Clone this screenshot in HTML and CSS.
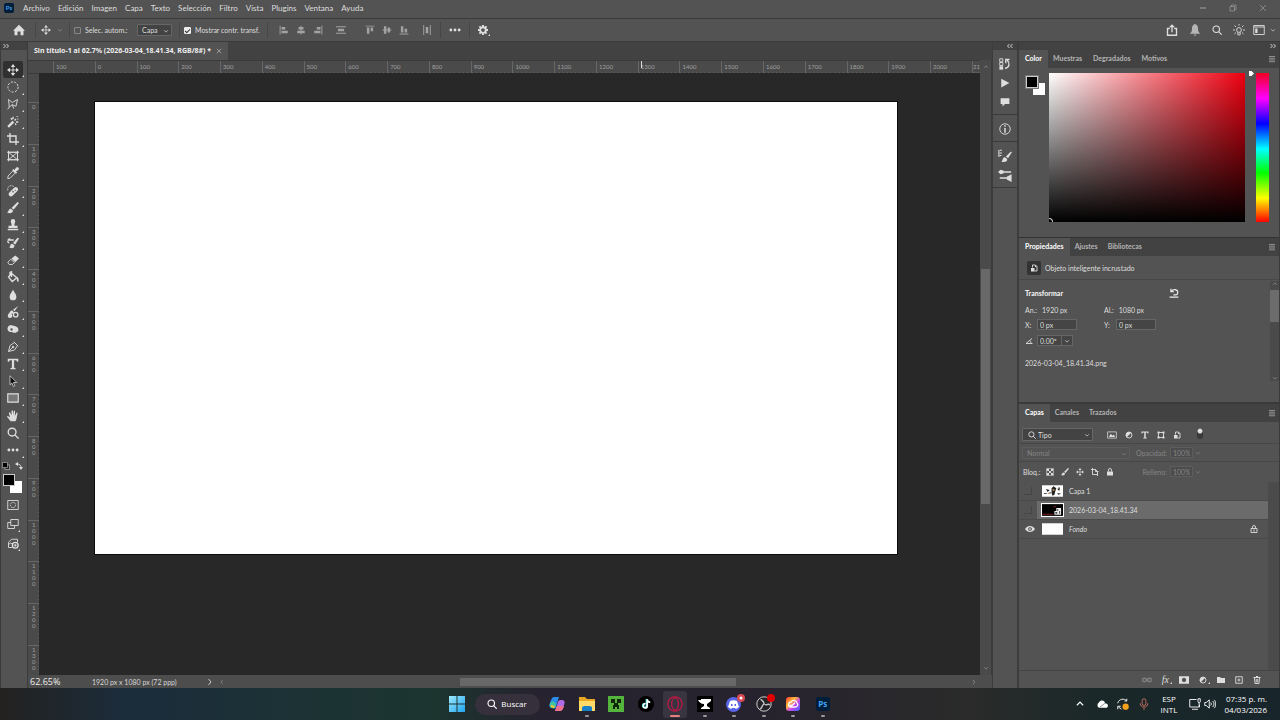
FILE: index.html
```html
<!DOCTYPE html>
<html lang="es">
<head>
<meta charset="utf-8">
<title>Sin título-1 al 62.7%</title>
<link rel="stylesheet" href="styles.css">
</head>
<body>
<svg class="sprite" aria-hidden="true">
  <symbol id="chev-down" viewBox="0 0 16 16"><path class="ln2" d="M3 6l5 5 5-5"/></symbol>
  <symbol id="chev-up" viewBox="0 0 16 16"><path class="ln2" d="M3 10l5-5 5 5"/></symbol>
  <symbol id="chev-right" viewBox="0 0 16 16"><path class="ln2" d="M5 2l5 6-5 6"/></symbol>
  <symbol id="chev-left" viewBox="0 0 16 16"><path class="ln2" d="M10 3L5 8l5 5"/></symbol>
  <symbol id="dbl-right" viewBox="0 0 16 16"><path class="ln2" d="M3 4l4 4-4 4M9 4l4 4-4 4"/></symbol>
  <symbol id="dbl-left" viewBox="0 0 16 16"><path class="ln2" d="M7 4L3 8l4 4M13 4L9 8l4 4"/></symbol>
  <symbol id="burger" viewBox="0 0 16 16"><path class="ln2" d="M2 3h12M2 6.500h12M2 10h12M2 13.500h12"/></symbol>
  <symbol id="home" viewBox="0 0 16 16"><path d="M8 1L0 9h2v6h4v-5h4v5h4V9h2z"/></symbol>
  <symbol id="move" viewBox="0 0 16 16"><path class="ln" d="M8 2v12M2 8h12"/><path d="M8 0l3 4H5zM8 16l-3-4h6zM0 8l4-3v6zM16 8l-4 3V5z"/></symbol>
  <symbol id="al-left" viewBox="0 0 16 16"><path d="M1 1h1.500v14H1zM4 3h6v4H4zM4 9h10v4H4z"/></symbol>
  <symbol id="al-hc" viewBox="0 0 16 16"><path d="M7.200 1h1.600v14H7.200zM4 3h8v4H4zM2 9h12v4H2z"/></symbol>
  <symbol id="al-right" viewBox="0 0 16 16"><path d="M13.500 1H15v14h-1.500zM6 3h6v4H6zM2 9h10v4H2z"/></symbol>
  <symbol id="dist-v" viewBox="0 0 16 16"><path d="M0 2h16v1.500H0zM3 6h10v4H3zM0 12.500h16V14H0z"/></symbol>
  <symbol id="al-top" viewBox="0 0 16 16"><path d="M1 1h14v1.500H1zM3 4h4v10H3zM9 4h4v6H9z"/></symbol>
  <symbol id="al-vc" viewBox="0 0 16 16"><path d="M1 7.200h14v1.600H1zM3 2h4v12H3zM9 4h4v8H9z"/></symbol>
  <symbol id="al-bot" viewBox="0 0 16 16"><path d="M1 13.500h14V15H1zM3 2h4v10H3zM9 6h4v6H9z"/></symbol>
  <symbol id="dist-h" viewBox="0 0 16 16"><path d="M2 0h1.500v16H2zM6 3h4v10H6zM12.500 0H14v16h-1.500z"/></symbol>
  <symbol id="dots" viewBox="0 0 16 16"><circle cx="2.500" cy="8" r="1.900"/><circle cx="8" cy="8" r="1.900"/><circle cx="13.500" cy="8" r="1.900"/></symbol>
  <symbol id="gear" viewBox="0 0 16 16"><circle cx="8" cy="8" r="4.500" fill="none" stroke="currentColor" stroke-width="3"/><path class="ln3" d="M8 0v3M8 13v3M0 8h3M13 8h3M2.300 2.300l2 2M11.700 11.700l2 2M13.700 2.300l-2 2M4.300 11.700l-2 2"/></symbol>
  <symbol id="share" viewBox="0 0 16 16"><path class="ln2" d="M5 6H2v9h12V6h-3M8 11V2M5 4.500L8 1.500l3 3"/></symbol>
  <symbol id="bell" viewBox="0 0 16 16"><path d="M8 0c-3 1-4 3-4 6 0 4-1 5-3 7h14c-2-2-3-3-3-7 0-3-1-5-4-6zM6 14h4l-2 2z"/></symbol>
  <symbol id="search" viewBox="0 0 16 16"><circle class="ln2" cx="6.800" cy="6.800" r="5.200"/><path class="ln2" d="M10.500 10.500L15.500 15.500"/></symbol>
  <symbol id="bulb" viewBox="0 0 16 16"><circle class="ln" cx="8" cy="8" r="3.200"/><path class="ln" d="M6.500 11v3.500h3V11M8 0v2M0 8h2.500M13.500 8H16M2 2l2 2M14 2l-2 2M2 13l2-1.500M14 13l-2-1.500"/></symbol>
  <symbol id="workspace" viewBox="0 0 16 16"><path class="ln" d="M1 2h14v12H1zM1 4h14"/><path d="M3 6h3v6H3z"/></symbol>
  <symbol id="minim" viewBox="0 0 16 16"><path class="ln2" d="M2 8h12"/></symbol>
  <symbol id="restore" viewBox="0 0 16 16"><path class="ln" d="M2 5h9v9H2zM5 5V2h9v9h-3"/></symbol>
  <symbol id="close" viewBox="0 0 16 16"><path class="ln" d="M2 2l12 12M14 2L2 14"/></symbol>
  <symbol id="marquee" viewBox="0 0 16 16"><circle class="ln" cx="8" cy="8" r="6.800" stroke-dasharray="3 1.700"/></symbol>
  <symbol id="lasso" viewBox="0 0 16 16"><path class="ln" d="M2 2l5 4 7-4-2 9-5-2 2 5M2 2l1 10 4-3M3 12l-2 3"/></symbol>
  <symbol id="wand" viewBox="0 0 16 16"><path class="ln3" d="M1.500 14.500l7-7"/><path class="ln2" d="M10 6l2-2M8 1v3M13 1l1-1M12 8h3M14 4h1M5 3l2 2M11 10l1 2"/></symbol>
  <symbol id="crop" viewBox="0 0 16 16"><path class="ln2" d="M4 0v12h12M0 4h12v12"/></symbol>
  <symbol id="frame" viewBox="0 0 16 16"><path class="ln" d="M2 3h12v10H2zM2 3l12 10M14 3L2 13M0 3h16M0 13h16M2 1v14M14 1v14"/></symbol>
  <symbol id="dropper" viewBox="0 0 16 16"><path class="ln" d="M8 5l3 3-7 7-3 .5L1.500 12z"/><path d="M7 4l1.500-1.500L10 4l2-3c3-2 5 1 3 3l-3 2 1.500 1.500L12 9z"/></symbol>
  <symbol id="heal" viewBox="0 0 16 16"><rect x="1" y="6" width="15" height="6" rx="3" transform="rotate(-45 8.500 9)"/><path class="ln" stroke-dasharray="2 1.500" d="M9 2C5-1 0 2 1 7"/><circle cx="8" cy="9" r="1" fill="#444"/><circle cx="11" cy="7" r=".8" fill="#444"/></symbol>
  <symbol id="brush" viewBox="0 0 16 16"><path d="M15.500.5L14 0 6 8l3 2 6.500-8zM5 9c-3 0-2 3-5 5 4 2 8 1 8-3z"/></symbol>
  <symbol id="stamp" viewBox="0 0 16 16"><path d="M8 0a3 3 0 0 0-3 3c0 2 1.500 3 1 6H2v3h12V9h-4c-.5-3 1-4 1-6a3 3 0 0 0-3-3zM1 13h14v2H1z"/></symbol>
  <symbol id="histbrush" viewBox="0 0 16 16"><path d="M15.500 1.500L14 1 8 8l3 2 5-8zM7 9c-3 0-2 3-4 5 4 2 7 1 7-3z"/><path class="ln2" d="M1 4h8M1 4l3-2M3 8c-1 0-2-1-2-3"/></symbol>
  <symbol id="eraser" viewBox="0 0 16 16"><path d="M6 6l5-4 5 4-5 5z"/><path class="ln" d="M5 7l5 4.500-3 2.500H3l-2-3z"/></symbol>
  <symbol id="bucket" viewBox="0 0 16 16"><path class="ln2" d="M6 3l7 6-6 5-5-6zM6 8V1L4 2v3"/><path d="M13 8c3 1 3 4 2 7-2-1-2-3-2-7z"/></symbol>
  <symbol id="drop" viewBox="0 0 16 16"><path d="M8 1c2 4 4.500 6 4.500 9.500a4.500 4.500 0 0 1-9 0C3.500 7 6 5 8 1z"/></symbol>
  <symbol id="mixer" viewBox="0 0 16 16"><path d="M15 0L8 5l2 2zM7 6C4 6 4 9 2 10c2 1 7 1 7-2z"/><circle cx="4" cy="13" r="3"/><circle class="ln2" cx="11.500" cy="11.500" r="3"/></symbol>
  <symbol id="sponge" viewBox="0 0 16 16"><path fill-rule="evenodd" d="M1 6c1-4 6-3 9-2 4 1 6 3 5 7l-2 1-1 1H8l-1-1H4C1 11 0 8 1 6zm5 1a1.600 1.600 0 1 0 .1 0z"/></symbol>
  <symbol id="pen" viewBox="0 0 16 16"><path class="ln" d="M2 14l2-8 6-4 4 4-4 6zM2 14l6-6M9 1l6 6"/><circle cx="8" cy="8" r="1.500"/></symbol>
  <symbol id="type" viewBox="0 0 16 16"><path d="M1 1h14v4h-1.500C13 3 12.500 3 9.500 3v10l2 .5V15h-7v-1.500l2-.5V3C3.500 3 3 3 2.500 5H1z"/></symbol>
  <symbol id="arrow" viewBox="0 0 16 16"><path d="M4 1l9 9H8.500l2 4.500-2 .8-2-4.500L4 13z" fill="#111" stroke="currentColor"/></symbol>
  <symbol id="rect" viewBox="0 0 16 16"><path d="M1 2.500h14v11H1z" fill="#777" stroke="currentColor" stroke-width="1.500"/></symbol>
  <symbol id="hand" viewBox="0 0 16 16"><path d="M5 15C3 13 2 11 0 9c1-2 2 0 4 1L2.500 4c.5-1.500 1.500-1 2 0L6 7V1.500C6.500 0 7.500 0 8 1.500V7l1-5.500c.5-1 1.500-1 1.800.3L10.500 8l2-4c.7-1 1.700-.5 1.500.5L13 10c-.5 3-1 4-2 5z"/></symbol>
  <symbol id="mask" viewBox="0 0 16 16"><path class="ln" d="M1 2h14v12H1z"/><circle class="ln" cx="8" cy="8" r="3.500" stroke-dasharray="2 1"/></symbol>
  <symbol id="screens" viewBox="0 0 16 16"><path class="ln" d="M5 2h10v8H5zM5 6H1v8h9v-4"/></symbol>
  <symbol id="imgplus" viewBox="0 0 16 16"><path class="ln" d="M7 14H2V7l4-4h8v4M2 10l3-2 3 2"/><circle class="ln2" cx="11" cy="11" r="3.800"/><path class="ln" d="M11 9v4M9 11h4"/></symbol>
  <symbol id="swap" viewBox="0 0 16 16"><path class="ln2" d="M4 4c6 0 8 3 8 8"/><path d="M0 4l6-4v8zM12 16l-4-6h8z"/></symbol>
  <symbol id="defcol" viewBox="0 0 16 16"><path d="M6 6h9v9H6z" fill="#222" stroke="currentColor"/><path d="M1 1h10v10H1z" fill="#000" stroke="currentColor"/></symbol>
  <symbol id="history" viewBox="0 0 16 16"><path class="ln" d="M1 1h4v4H1zM1 6h4v4H1z"/><path d="M.5 11h5v4.500h-5z"/><path class="ln2" d="M8 14c6-1 7-7 3-11M9 7V2h5"/></symbol>
  <symbol id="play" viewBox="0 0 16 16"><path d="M2 1l13 7-13 7z"/></symbol>
  <symbol id="chat" viewBox="0 0 16 16"><path d="M1 2h14v9H8l-4 4v-4H1z"/></symbol>
  <symbol id="info" viewBox="0 0 16 16"><circle class="ln" cx="8" cy="8" r="7"/><path d="M7 3h2v2H7zM7 6.500h2V13H7z"/></symbol>
  <symbol id="brushset" viewBox="0 0 16 16"><path d="M16 3.500L14.500 3 9 8.500l2.500 2zM8 9.500c-3 0-2 3-4 5 4 1 7 0 6.500-3z"/><path class="ln" d="M1 1v8M2 1.500h2.500M2 4.500h2.500M2 7.500h2"/></symbol>
  <symbol id="brushes" viewBox="0 0 16 16"><path d="M0 4.500l3-2.500 3.500 1v3L3 7zM15.500 7v9L10 13v-3z"/><path class="ln2" d="M5 4.500h10M2 11.500h9"/></symbol>
  <symbol id="smart" viewBox="0 0 16 16"><path class="ln2" d="M5 7V2h6l3 3v9H9"/><path d="M2 8h7v7H2zM10 2l4 4h-4z"/></symbol>
  <symbol id="reset" viewBox="0 0 16 16"><path class="ln2" d="M4 5c3-4 10-3 10 2 0 3-2 4-4 4H7M1 14.500h14M3 1v5h5"/></symbol>
  <symbol id="angle" viewBox="0 0 16 16"><path class="ln2" d="M14 3L2 13h13M9 7c2 1 3 3 3 6"/></symbol>
  <symbol id="image" viewBox="0 0 16 16"><path class="ln" d="M1 3h14v10H1z"/><path d="M3 11l3-5 3 3 2-2 2 4z"/></symbol>
  <symbol id="adjust" viewBox="0 0 16 16"><circle class="ln2" cx="8" cy="8" r="6"/><path d="M12.500 3.500A6.400 6.400 0 0 0 3.500 12.500z"/></symbol>
  <symbol id="shape" viewBox="0 0 16 16"><path class="ln2" d="M3 3h10v10H3z"/><path d="M1 1h4v4H1zM11 1h4v4h-4zM1 11h4v4H1zM11 11h4v4h-4z"/></symbol>
  <symbol id="checker" viewBox="0 0 16 16"><path class="ln" d="M1 1h14v14H1z"/><path d="M2 2h4v4H2zM10 2h4v4h-4zM6 6h4v4H6zM2 10h4v4H2zM10 10h4v4h-4z"/></symbol>
  <symbol id="artboard" viewBox="0 0 16 16"><path class="ln2" d="M0 3h9l4 4v6H3V0M13 11v5M9 3v4h6"/></symbol>
  <symbol id="lock" viewBox="0 0 16 16"><path d="M2 7h12v8H2z"/><path class="ln2" d="M5 7V4a3 3 0 0 1 6 0v3"/></symbol>
  <symbol id="lock-o" viewBox="0 0 16 16"><path class="ln2" d="M2 7h12v8H2zM5 7V4a3 3 0 0 1 6 0v3"/><path d="M7 9h2v4H7z"/></symbol>
  <symbol id="eye" viewBox="0 0 16 16"><path fill-rule="evenodd" d="M0 8c4-6.500 12-6.500 16 0-4 6.500-12 6.500-16 0zm8-3a3 3 0 1 0 .1 0z"/><circle cx="8" cy="8" r="1.400"/></symbol>
  <symbol id="link" viewBox="0 0 16 16"><circle class="ln2" cx="4" cy="8" r="3"/><circle class="ln2" cx="12" cy="8" r="3"/><path class="ln" d="M5 8h6"/></symbol>
  <symbol id="addmask" viewBox="0 0 16 16"><path fill-rule="evenodd" d="M0 2h16v12H0zm8 2.500a3.500 3.500 0 1 0 .1 0z"/></symbol>
  <symbol id="folder" viewBox="0 0 16 16"><path d="M0 2h6l2 2h8v10H0z"/></symbol>
  <symbol id="plus" viewBox="0 0 16 16"><path class="ln2" d="M1.500 1.500h13v13h-13zM8 5v6M5 8h6"/></symbol>
  <symbol id="trash" viewBox="0 0 16 16"><path d="M1 2h5V0h4v2h5v2H1z"/><path class="ln2" d="M3 4l1 11h8l1-11M6.500 6v7M9.500 6v7"/></symbol>
  <symbol id="cloud" viewBox="0 0 16 16"><path d="M4 13a4 4 0 0 1 0-7c2-4 8-3 8 1 5 0 5 6 1 6z"/><path d="M5 12l7-5" stroke="#777"/></symbol>
  <symbol id="sync" viewBox="0 0 16 16"><path class="ln" d="M1 7c1-6 9-7 12-3V1M13 4h-3M1 15v-4h4M2 12l4 3"/><circle cx="11.500" cy="11.500" r="4.200" fill="#f3a11b"/></symbol>
  <symbol id="mic" viewBox="0 0 16 16"><path class="ln" d="M8 1a2.500 2.500 0 0 0-2.500 2.500v4a2.500 2.500 0 0 0 5 0v-4A2.500 2.500 0 0 0 8 1zM3 7c0 7 10 7 10 0M8 12.500V16"/></symbol>
  <symbol id="monitor" viewBox="0 0 16 16"><path class="ln" d="M10 2H1v10h13V9M4 15h8M12 1h3v4l-1.500 2L12 5zM13.500 7v5"/></symbol>
  <symbol id="speaker" viewBox="0 0 16 16"><path class="ln" d="M1 6h2l4-3.500v11L3 10H1zM9 6c1 1 1 3 0 4M11.500 4c2.500 2 2.500 6 0 8M13.500 2.500c3 3 3 8 0 11"/></symbol>
</svg>

<div class="app">
  <header class="menubar">
    <span class="ps-logo">Ps</span>
    <nav class="menus" aria-label="Menú principal">
      <button>Archivo</button><button>Edición</button><button>Imagen</button><button>Capa</button><button>Texto</button><button>Selección</button><button>Filtro</button><button>Vista</button><button>Plugins</button><button>Ventana</button><button>Ayuda</button>
    </nav>
    <div class="winbtns">
      <button aria-label="Minimizar"><svg class="i8"><use href="#minim"/></svg></button>
      <button aria-label="Restaurar"><svg class="i8"><use href="#restore"/></svg></button>
      <button aria-label="Cerrar"><svg class="i8"><use href="#close"/></svg></button>
    </div>
  </header>

  <div class="options">
    <button class="home" aria-label="Inicio"><svg class="i12"><use href="#home"/></svg></button>
    <div class="group g-move">
      <button aria-label="Mover"><svg class="i10"><use href="#move"/></svg></button>
      <svg class="i6 dim"><use href="#chev-down"/></svg>
    </div>
    <div class="group g-auto">
      <label class="check"><input type="checkbox"><span>Selec. autom.:</span></label>
      <span class="combo capa"><select aria-label="Selección automática"><option>Capa</option></select><svg class="i6"><use href="#chev-down"/></svg></span>
    </div>
    <div class="group g-show">
      <label class="check"><input type="checkbox" checked><span>Mostrar contr. transf.</span></label>
    </div>
    <div class="group g-align">
      <button aria-label="Alinear izquierda"><svg class="i10"><use href="#al-left"/></svg></button>
      <button aria-label="Centrar horizontal"><svg class="i10"><use href="#al-hc"/></svg></button>
      <button aria-label="Alinear derecha"><svg class="i10"><use href="#al-right"/></svg></button>
      <button class="apart" aria-label="Distribuir vertical"><svg class="i10"><use href="#dist-v"/></svg></button>
      <button class="apart2" aria-label="Alinear arriba"><svg class="i10"><use href="#al-top"/></svg></button>
      <button aria-label="Centrar vertical"><svg class="i10"><use href="#al-vc"/></svg></button>
      <button aria-label="Alinear abajo"><svg class="i10"><use href="#al-bot"/></svg></button>
      <button class="apart" aria-label="Distribuir horizontal"><svg class="i10"><use href="#dist-h"/></svg></button>
    </div>
    <div class="group g-more"><button aria-label="Más"><svg class="i12"><use href="#dots"/></svg></button></div>
    <div class="group g-gear"><button class="corner" aria-label="Ajustes"><svg class="i10"><use href="#gear"/></svg></button></div>
    <div class="right-tools">
      <button aria-label="Compartir"><svg class="i12"><use href="#share"/></svg></button>
      <button class="soft" aria-label="Avisos"><svg class="i12"><use href="#bell"/></svg></button>
      <button aria-label="Buscar"><svg class="i10"><use href="#search"/></svg></button>
      <button aria-label="Consejos"><svg class="i12"><use href="#bulb"/></svg></button>
      <button class="ws" aria-label="Espacio de trabajo"><svg class="i12"><use href="#workspace"/></svg><svg class="i6"><use href="#chev-down"/></svg></button>
    </div>
  </div>

  <main class="work">
    <aside class="toolbox">
      <button class="collapse" aria-label="Expandir"><svg class="i8"><use href="#dbl-right"/></svg></button>
      <div class="tools" id="tools"></div>
      <div class="minis"><svg class="i8"><use href="#defcol"/></svg><svg class="i8"><use href="#swap"/></svg></div>
      <div class="swatches"><span class="bg"></span><span class="fg"></span></div>
      <div class="modes">
        <button aria-label="Máscara rápida"><svg class="i12"><use href="#mask"/></svg></button>
        <button class="corner" aria-label="Modo de pantalla"><svg class="i12"><use href="#screens"/></svg></button>
        <button class="corner" aria-label="Generar"><svg class="i12"><use href="#imgplus"/></svg></button>
      </div>
    </aside>

    <section class="document">
      <div class="doctabs"><div class="doctab"><span>Sin título-1 al 62.7% (2026-03-04_18.41.34, RGB/8#) *</span><button aria-label="Cerrar pestaña"><svg class="i6"><use href="#close"/></svg></button></div></div>
      <div class="stage">
        <div class="origin"></div>
        <div class="ruler-h"><div class="cells" id="rh"></div><div class="cell last"><span>21</span></div><span class="cursor"></span></div>
        <div class="vscroll"><svg class="i6"><use href="#chev-up"/></svg><div class="track"><div class="thumb"></div></div><svg class="i6"><use href="#chev-down"/></svg></div>
        <div class="ruler-v"><div class="cells" id="rv"></div><div class="cell last"><span>1300</span></div></div>
        <div class="canvas"><div class="page"></div></div>
      </div>
      <footer class="status">
        <span class="zoom">62.65%</span><span class="dims">1920 px x 1080 px (72 ppp)</span>
        <button aria-label="Información"><svg class="i8"><use href="#chev-right"/></svg></button>
        <div class="hscroll"><svg class="i6"><use href="#chev-left"/></svg><div class="track"><div class="thumb"></div></div><svg class="i6"><use href="#chev-right"/></svg></div>
      </footer>
    </section>

    <aside class="strip">
      <button class="collapse" aria-label="Expandir paneles"><svg class="i8"><use href="#dbl-left"/></svg></button>
      <div class="dock">
        <div class="dockgroup"><button aria-label="Historia"><svg class="i12"><use href="#history"/></svg></button><button aria-label="Acciones"><svg class="i10"><use href="#play"/></svg></button><button aria-label="Comentarios"><svg class="i10"><use href="#chat"/></svg></button></div>
        <div class="dockgroup"><button aria-label="Información"><svg class="i12"><use href="#info"/></svg></button></div>
        <div class="dockgroup"><button aria-label="Ajustes de pincel"><svg class="i14"><use href="#brushset"/></svg></button><button aria-label="Pinceles"><svg class="i14"><use href="#brushes"/></svg></button></div>
      </div>
    </aside>

    <aside class="panels">
      <button class="collapse end" aria-label="Contraer paneles"><svg class="i8"><use href="#dbl-right"/></svg></button>
      <section class="panel p-color">
        <div class="tabs"><button class="on">Color</button><button>Muestras</button><button>Degradados</button><button>Motivos</button><svg class="i8"><use href="#burger"/></svg></div>
        <div class="picker">
          <div class="swatches"><span class="bg"></span><span class="fg"></span></div>
          <div class="field"><span class="spot"></span></div>
          <div class="hue"><svg class="knob" viewBox="0 0 6 6"><path d="M0 0h3l3 3-3 3H0z"/></svg></div>
        </div>
      </section>
      <section class="panel p-props">
        <div class="tabs"><button class="on">Propiedades</button><button>Ajustes</button><button>Bibliotecas</button><svg class="i8"><use href="#burger"/></svg></div>
        <div class="kind"><span class="kindicon"><svg class="i8"><use href="#smart"/></svg></span><span>Objeto inteligente incrustado</span></div>
        <div class="propbody">
          <div class="form">
            <div class="formhead"><strong>Transformar</strong><button aria-label="Restablecer"><svg class="i10"><use href="#reset"/></svg></button></div>
            <div class="pair"><div><span>An.:</span><span class="val">1920 px</span></div><div><span>Al.:</span><span class="val">1080 px</span></div></div>
            <div class="pair xy"><div><label for="px">X:</label><input id="px" type="text" value="0 px"></div><div><label for="py">Y:</label><input id="py" type="text" value="0 px"></div></div>
            <div class="ang"><svg class="i8"><use href="#angle"/></svg><input type="text" value="0.00º" aria-label="Ángulo"><button aria-label="Ángulos"><svg class="i6"><use href="#chev-down"/></svg></button></div>
            <div class="fname">2026-03-04_18.41.34.png</div>
          </div>
          <div class="pscroll"><svg class="i6"><use href="#chev-up"/></svg><div class="track"><div class="thumb"></div></div><svg class="i6"><use href="#chev-down"/></svg></div>
        </div>
      </section>
      <section class="panel p-layers">
        <div class="tabs"><button class="on">Capas</button><button>Canales</button><button>Trazados</button><svg class="i8"><use href="#burger"/></svg></div>
        <div class="row filter">
          <span class="combo tipo"><svg class="i8 lead"><use href="#search"/></svg><select aria-label="Filtro"><option>Tipo</option></select><svg class="i6"><use href="#chev-down"/></svg></span>
          <div class="ficons"><svg class="i10"><use href="#image"/></svg><svg class="i8"><use href="#adjust"/></svg><svg class="i8"><use href="#type"/></svg><svg class="i8"><use href="#shape"/></svg><svg class="i8"><use href="#smart"/></svg></div>
          <label class="toggle"><input type="checkbox" checked aria-label="Filtrado"></label>
        </div>
        <div class="row blend off">
          <span class="combo normal"><select aria-label="Modo de fusión" disabled><option>Normal</option></select><svg class="i6"><use href="#chev-down"/></svg></span>
          <label for="op">Opacidad:</label><span class="pct"><input id="op" type="text" value="100%" disabled><svg class="i6"><use href="#chev-down"/></svg></span>
        </div>
        <div class="row locks">
          <span>Bloq.:</span><div class="licons"><svg class="i8"><use href="#checker"/></svg><svg class="i8"><use href="#brush"/></svg><svg class="i8"><use href="#move"/></svg><svg class="i8"><use href="#artboard"/></svg><svg class="i8"><use href="#lock"/></svg></div>
          <label class="off" for="fi">Relleno:</label><span class="pct off"><input id="fi" type="text" value="100%" disabled><svg class="i6"><use href="#chev-down"/></svg></span>
        </div>
        <div class="layerwrap">
          <ul class="layers">
            <li><button class="vis" aria-label="Visibilidad"></button><div class="lay">
              <svg class="thumbimg" viewBox="0 0 22 12"><path fill="#fff" d="M0 0h22v12H0z"/><path fill="#222" d="M10 3l2-2 3 2-1 3-1 4-2 1-1-3zM4 4l4 1-2 2zM16 4l3-2-1 4zM2 8h3v1H2zM7 8l2-1v2zM16 8l4 1-3 1z"/><path fill="#a87b4d" d="M11 4h2v2h-2zM17 2h1v2h-1zM6 8h2v1H6z"/></svg><span>Capa 1</span></div></li>
            <li class="sel"><button class="vis" aria-label="Visibilidad"></button><div class="lay">
              <svg class="thumbimg ring" viewBox="0 0 22 12"><path fill="#000" d="M0 0h22v12H0z"/><path fill="#7b2020" d="M0 10h12v1H0zM12 2h3v1h-3z"/><path fill="#eee" d="M15 4h5v7h-7V7h2z"/><path fill="#444" d="M14 8h2v2h-2zM16 5h1v2h-1zM18 7h1v3h-1z"/></svg><span>2026-03-04_18.41.34</span></div></li>
            <li><button class="vis eye" aria-label="Visibilidad"><svg class="i10"><use href="#eye"/></svg></button><div class="lay"><svg class="thumbimg" viewBox="0 0 22 12"><path fill="#fff" d="M0 0h22v12H0z"/></svg><em>Fondo</em><svg class="i8 lk"><use href="#lock-o"/></svg></div></li>
          </ul>
          <div class="gutter"></div>
        </div>
        <footer class="layfoot"><button class="faint" aria-label="Enlazar"><svg class="i10"><use href="#link"/></svg></button><button class="corner fx">fx</button><button aria-label="Máscara"><svg class="i10"><use href="#addmask"/></svg></button><button class="corner" aria-label="Ajuste"><svg class="i8"><use href="#adjust"/></svg></button><button aria-label="Grupo"><svg class="i8"><use href="#folder"/></svg></button><button aria-label="Nueva capa"><svg class="i8"><use href="#plus"/></svg></button><button aria-label="Eliminar"><svg class="i8"><use href="#trash"/></svg></button></footer>
      </section>
    </aside>
  </main>

  <footer class="taskbar">
    <div class="apps">
      <button aria-label="Inicio de Windows"><svg class="app-i" viewBox="0 0 16 16"><defs><linearGradient id="win" x2="1" y2="1"><stop stop-color="#9fe8ff"/><stop offset="1" stop-color="#1da5ee"/></linearGradient></defs><path fill="url(#win)" d="M0 0h7.500v7.500H0zM8.500 0H16v7.500H8.500zM0 8.500h7.500V16H0zM8.500 8.500H16V16H8.500z"/></svg></button>
      <button class="find"><svg class="i10"><use href="#search"/></svg><span>Buscar</span></button>
      <button aria-label="Copilot"><svg class="app-i" viewBox="0 0 16 16"><path fill="#2a8be8" d="M5 1h5l-3 10c-1 3-2 1-4 1-3 0-3-3-2-5C2 4 3 1 5 1z"/><path fill="#42c79b" d="M1 7l3-2 3 3-1 4c-4 1-6-1-5-5z"/><path fill="#f0c03a" d="M2 9l4 1-1 2c-2 0-4-1-3-3z"/><path fill="#b26be8" d="M11 4h2c3 0 3 3 2 5-1 4-2 6-4 6H6l3-9c.5-1 1-2 2-2z"/><path fill="#f0708b" d="M8 10h7c-1 3-2 5-4 5H6z"/></svg></button>
      <button class="run" aria-label="Explorador"><svg class="app-i" viewBox="0 0 16 16"><path fill="#e8a722" d="M0 1h6l2 2h8v12H0z"/><path fill="#ffda66" d="M0 5h16v10H0z"/><path fill="#1680c9" d="M3 11l2-1h6l2 1v4H3z"/></svg></button>
      <button aria-label="Minecraft"><svg class="app-i" viewBox="0 0 16 16"><path fill="#55b43c" d="M0 0h16v16H0z"/><path fill="#112808" d="M3 3h4v4H3zM9 3h4v4H9zM6 7h4v2h1v4H9v-2H7v2H5V9h1z"/></svg></button>
      <button aria-label="TikTok"><svg class="app-i" viewBox="0 0 16 16"><circle cx="8" cy="8" r="8" fill="#000"/><g fill="none" stroke-width="1.700"><path stroke="#26e4e4" d="M7 7.500c-3 0-3 4-.5 4 1 0 2-.8 2-2V3c0 2 1.500 3 3 3"/><path stroke="#fff" d="M7.700 7.500c-3 0-3 4.500-.5 4.500 1 0 2-.8 2-2V3.200c0 2 1.500 3 3 3"/></g></svg></button>
      <button class="run active" aria-label="Opera GX"><svg class="app-i" viewBox="0 0 16 16"><circle cx="8" cy="8" r="7.200" fill="none" stroke="#c91546" stroke-width="1.200"/><ellipse cx="8" cy="8" rx="3.300" ry="6" fill="none" stroke="#c91546" stroke-width="1.200"/></svg></button>
      <button class="run" aria-label="Anvil"><svg class="app-i" viewBox="0 0 16 16"><path fill="#000" d="M0 0h16v16H0z"/><path fill="#fff" d="M1 4h3V3h10v2l-4 3v2l3 2v1H4v-1l3-2V8C4 8 2 6 1 4z"/></svg></button>
      <button class="run" aria-label="Discord"><svg class="app-i" viewBox="0 0 16 16"><circle cx="7.500" cy="8.500" r="7.500" fill="#5865e8"/><path fill="#fff" fill-rule="evenodd" d="M4 5c2-1 5-1 7 0l2 6-3 2-1-1H6l-1 1-3-2zm1 3v2h1.500V8zm3.500 0v2H10V8z"/></svg><svg class="badge" viewBox="0 0 8 8"><circle cx="4" cy="4" r="4" fill="#d84a50"/><circle cx="4" cy="4" r="1.500" fill="#fff"/></svg></button>
      <button class="run" aria-label="OBS"><svg class="app-i" viewBox="0 0 16 16"><circle cx="8" cy="8" r="7.200" fill="#222326" stroke="#ccc"/><path d="M8 8c0-4-3-3-3-5M8 8c3 2 4-1 6 1M8 8c-3 2-1 4-4 5" fill="none" stroke="#bbb" stroke-width="1.500"/></svg><svg class="badge" viewBox="0 0 8 8"><circle cx="4" cy="4" r="4" fill="#e00000"/></svg></button>
      <button class="run" aria-label="Creative Cloud"><svg class="app-i" viewBox="0 0 16 16"><defs><linearGradient id="cc" y2="1" x2="1"><stop stop-color="#f33"/><stop offset=".35" stop-color="#fb3"/><stop offset=".6" stop-color="#c4e"/><stop offset="1" stop-color="#36f"/></linearGradient></defs><rect x="1" y="1" width="14" height="14" rx="3" fill="url(#cc)"/><path d="M5 11c-3-2-1-5 1-5 2-3 6-1 6 1 2 2 0 4-2 4zM5 9c2 2 4-2 5-2" fill="none" stroke="#fff" stroke-width="1.300"/></svg></button>
      <button class="run" aria-label="Photoshop"><span class="ps-logo big">Ps</span></button>
    </div>
    <div class="tray">
      <button class="more" aria-label="Iconos ocultos"><svg class="i10"><use href="#chev-up"/></svg></button>
      <svg class="i12"><use href="#cloud"/></svg><svg class="i12"><use href="#sync"/></svg><svg class="i12 micc"><use href="#mic"/></svg>
      <button class="lang"><span>ESP</span><span>INTL</span></button>
      <svg class="i12 mon"><use href="#monitor"/></svg><svg class="i12 spk"><use href="#speaker"/></svg>
      <button class="clock"><span>07:35 p. m.</span><span>04/03/2026</span></button>
    </div>
  </footer>
</div>
<script src="script.js"></script>
</body>
</html>
```
FILE: styles.css
```css
:root {
  --panel: #535353;
  --bar: #424242;
  --line: #3b3b3b;
  --text: #dedede;
  --small: 7px;
}
* { box-sizing: border-box; }
body { margin: 0; background: var(--panel); color: var(--text); font: var(--small)/10px Lato, "Open Sans", sans-serif; }
button, input, select { font: inherit; color: inherit; background: none; border: 0; margin: 0; padding: 0; border-radius: 0; appearance: none; outline: 0; }
button { display: flex; align-items: center; justify-content: center; white-space: nowrap; }
svg { display: block; fill: currentColor; flex: none; }
.sprite { position: absolute; width: 0; height: 0; }
.ln, .ln2, .ln3 { fill: none; stroke: currentColor; stroke-width: 1.2; }
.ln2 { stroke-width: 1.8; }
.ln3 { stroke-width: 3; }
.i6 { width: 6px; height: 6px; }
.i8 { width: 8px; height: 8px; }
.i10 { width: 10px; height: 10px; }
.i12 { width: 12px; height: 12px; }
.i14 { width: 14px; height: 14px; }
.dim { color: #999; }
.corner { position: relative; }
.corner::after { content: ""; position: absolute; right: -1px; bottom: 1px; border: 1px solid transparent; border-right-color: #ddd; border-bottom-color: #ddd; }

.app { display: grid; grid-template-rows: 19px 23px 1fr 32px; grid-template-columns: 100%; min-height: 100vh; }

/* Menu bar */
.menubar { display: flex; align-items: center; padding: 0 13px 2px 4px; border-bottom: 1px solid var(--line); font-size: 8px; }
.ps-logo { display: grid; place-items: center; width: 10px; height: 10px; border-radius: 2px; background: #001e3a; color: #42a5f5; font-size: 6px; font-weight: 700; }
.menus { display: flex; gap: 8px; margin-left: 9px; }
.winbtns { display: flex; gap: 22px; margin-left: auto; color: #aaa; }

/* Options bar */
.options { display: flex; align-items: center; border-bottom: 1px solid var(--line); }
.home { width: 35px; padding-left: 2px; }
.group { display: flex; align-items: center; height: 16px; border-left: 1px solid #474747; }
.g-move { width: 34px; gap: 6px; padding-left: 5px; }
.g-auto { width: 110px; padding-left: 4px; justify-content: space-between; padding-right: 7px; }
.g-show { width: 88px; padding-left: 4px; }
.check { display: flex; align-items: center; gap: 4px; white-space: nowrap; }
.check input { display: grid; place-items: center; width: 7px; height: 7px; border: 1px solid #888; border-radius: 1px; }
.check input:checked { background: #eee; border-color: #eee; }
.check input:checked::after { content: ""; width: 4px; height: 2px; border: solid #333; border-width: 0 0 1px 1px; transform: rotate(-45deg); }
.combo { position: relative; display: flex; align-items: center; background: #434343; border: 1px solid #666; border-radius: 1px; height: 12px; }
.combo select { flex: 1; min-width: 0; padding: 0 10px 0 4px; line-height: 10px; }
.combo select:disabled { opacity: 1; }
.combo > svg:last-child { position: absolute; right: 2px; top: 3px; pointer-events: none; }
.capa { width: 35px; }
.g-align { width: 173px; padding-left: 11px; gap: 7px; color: #a2a2a2; }
.apart { margin-left: 6px; }
.apart2 { margin-left: 12px; }
.g-more { width: 29px; justify-content: center; }
.g-gear { padding-left: 8px; }
.g-gear .corner::after { right: -2px; bottom: -1px; }
.right-tools { display: flex; align-items: center; gap: 11px; margin-left: auto; padding-right: 4px; }
.soft { color: #b5b5b5; }
.ws { gap: 5px; margin-left: -3px; }

/* Workspace */
.work { display: grid; grid-template-columns: 28px minmax(0, 1fr) 27px 261px; min-height: 0; background: var(--bar); }
.collapse { height: 8px; width: 100%; background: var(--bar); }
.toolbox { display: flex; flex-direction: column; background: var(--panel); border-left: 1px solid var(--line); border-right: 1px solid var(--line); }
.toolbox .collapse { justify-content: flex-start; padding-left: 1px; }
.tools { display: grid; grid-auto-rows: 1fr; height: 398px; margin: 11px 4px 0 2px; }
.tools button { border-radius: 2px; }
.tools button.on { background: #303030; }
.minis { display: flex; gap: 5px; padding: 3px 2px 0 1px; margin-bottom: 4px; }
.swatches { position: relative; width: 19px; height: 19px; }
.swatches span { position: absolute; width: 12px; height: 12px; }
.swatches .fg { left: 0; top: 0; background: #000; border: 1px solid #ccc; }
.swatches .bg { right: 0; bottom: 0; background: #fff; }
.toolbox .swatches { margin-left: 2px; }
.modes { display: grid; grid-auto-rows: 19px; justify-content: center; margin: 2px 2px 0 0; }

.document { display: flex; flex-direction: column; min-width: 0; }
.doctabs { height: 18px; display: flex; }
.doctab { display: flex; align-items: center; gap: 5px; padding: 0 6px; background: var(--panel); font-family: "Noto Sans", "Open Sans", sans-serif; font-weight: 700; color: #eee; white-space: nowrap; }
.stage { flex: 1; display: grid; grid-template: 13px minmax(0, 1fr) / 11px minmax(0, 1fr) 12px; }
.origin, .ruler-h, .ruler-v { background: #4a4a4a; color: #a0a0a0; border-top: 1px solid #3a3a3a; }
.ruler-h { position: relative; display: flex; padding-left: 14px; overflow: hidden; }
.ruler-h .cells { flex: 1; display: flex; }
.ruler-h .cell { flex: 1; min-width: 0; border-left: 1px solid #666; padding-left: 2px; line-height: 12px; font-size: 6px; background: repeating-linear-gradient(90deg, #5c5c5c 0 1px, transparent 1px 10%) bottom / 100% 1px no-repeat; }
.ruler-h .cell.last { flex: 0 0 8px; padding-left: 0; }
.cursor { position: absolute; left: 64%; top: 0; width: 1px; height: 7px; background: #ddd; }
.ruler-v { display: flex; flex-direction: column; padding-top: 28px; overflow: hidden; }
.ruler-v .cells { flex: 1; display: flex; flex-direction: column; }
.ruler-v .cell { flex: 1; min-height: 0; border-top: 1px solid #666; padding: 1px 0 0 4px; font-size: 6px; line-height: 6px; background: repeating-linear-gradient(180deg, #5c5c5c 0 1px, transparent 1px 10%) right / 1px 100% no-repeat; }
.ruler-v .cell span { display: block; width: 4px; word-break: break-all; }
.ruler-v .cell.last { flex: 0 0 30px; }
.vscroll { grid-row: 1 / 3; grid-column: 3; display: flex; flex-direction: column; align-items: center; background: #4a4a4a; color: #999; padding: 4px 0; border-right: 1px solid var(--line); }
.track { flex: 1; align-self: stretch; }
.vscroll .track { padding-top: 199px; margin-left: 1px; }
.vscroll .thumb { height: 235px; background: #686868; margin-right: 1px; }
.canvas { display: flex; background: #282828; padding: 29px 83px 121px 56px; }
.page { flex: 1; background: #fff; outline: 1px solid #0c0c0c; }
.status { display: flex; align-items: center; height: 13px; color: #d5d5d5; background: #4d4d4d; }
.zoom { width: 62px; padding-left: 2px; font: 9px/12px "Open Sans", sans-serif; color: #eee; }
.dims { width: 116px; padding-left: 2px; white-space: nowrap; }
.hscroll { flex: 1; display: flex; align-items: center; color: #999; margin-left: 5px; padding-right: 15px; }
.hscroll .track { padding-left: 31%; }
.hscroll .thumb { width: 54%; height: 8px; background: #686868; }

/* Icon strip */
.strip { padding: 0 2px 0 1px; display: flex; flex-direction: column; background: #3c3c3c; }
.strip .collapse { justify-content: flex-end; padding-right: 3px; }
.dock { flex: 1; background: var(--panel); }
.dockgroup { display: grid; justify-content: center; grid-auto-rows: 19px; padding: 4px 0 3px; border-bottom: 1px solid #3a3a3a; }

/* Panels */
.panels { display: flex; flex-direction: column; min-width: 0; border-right: 1px solid var(--line); }
.end { justify-content: flex-end; padding-right: 2px; }
.panel { background: var(--panel); display: flex; flex-direction: column; }
.tabs { display: flex; height: 18px; background: var(--bar); color: #b4b4b4; font-weight: 700; padding-right: 3px; align-items: center; }
.tabs button { height: 100%; padding: 0 5px 2px; }
.tabs .on { background: var(--panel); color: #fff; padding: 0 6px 2px; }
.tabs > svg { margin-left: auto; color: #999; }
.p-color { border-bottom: 1px solid #333; }
.p-color .tabs button + button { padding: 0 6px 2px 5px; }
.picker { display: grid; grid-template-columns: 23px 1fr 13px; padding: 5px 10px 15px 7px; height: 169px; }
.picker .swatches { margin-top: 3px; }
.picker .swatches .fg { outline: 1px solid #777; }
.field { position: relative; overflow: hidden; background: linear-gradient(0deg, #000, transparent), linear-gradient(90deg, #fff, #ee0010); margin-right: 11px; }
.spot { position: absolute; left: -3px; bottom: -3px; width: 7px; height: 7px; border: 1px solid #fff; border-radius: 50%; }
.hue { position: relative; background: linear-gradient(#f00020, #f0f 17%, #00f 34%, #0ff 51%, #0f0 67%, #ff0 84%, #f00); }
.hue .knob { position: absolute; left: -7px; top: -2px; width: 5px; height: 5px; fill: #fff; }
.p-props { border-bottom: 2px solid #3a3a3a; height: 166px; }
.kind { display: flex; align-items: center; gap: 4px; height: 24px; padding-left: 8px; border-bottom: 1px solid #474747; }
.kindicon { display: grid; place-items: center; width: 14px; height: 14px; background: #333; border-radius: 2px; }
.propbody { flex: 1; display: flex; }
.form { flex: 1; padding: 8px 0 0 6px; }
.formhead { display: flex; align-items: center; font-weight: 700; color: #eee; }
.formhead strong { width: 144px; }
.pair { display: grid; grid-template-columns: 79px 79px; margin-top: 7px; }
.pair > div { display: flex; align-items: center; }
.val { margin-left: 5px; }
.xy { margin-top: 4px; }
.xy label { width: 12px; }
input[type="text"] { width: 40px; height: 11px; background: #454545; border: 1px solid #666; padding: 0 2px; line-height: 9px; }
.ang { display: flex; align-items: center; margin-top: 5px; }
.ang input { width: 25px; margin-left: 4px; }
.ang button { width: 11px; height: 11px; border: 1px solid #666; border-left: 0; background: #454545; }
.fname { margin-top: 12px; }
.pscroll { width: 9px; height: 100px; margin-top: 1px; display: flex; flex-direction: column; align-items: center; background: #4a4a4a; color: #999; }
.pscroll .track { padding-top: 3px; }
.pscroll .thumb { height: 32px; background: #6c6c6c; }

.p-layers { flex: 1; }
.row { display: flex; align-items: center; height: 18px; padding-left: 3px; border-bottom: 1px solid #474747; white-space: nowrap; }
.filter { height: 22px; padding-top: 4px; }
.tipo { width: 71px; height: 13px; padding-left: 5px; }
.tipo select { padding-left: 2px; }
.ficons { display: flex; align-items: center; gap: 8px; margin-left: 14px; }
.toggle { margin-left: 16px; height: 14px; }
.toggle input { display: block; width: 6px; height: 11px; border-radius: 3px; background: radial-gradient(circle at 50% 3px, #ddd 0 2px, #3a3a3a 3px); }
.off { color: #858585; }
.blend .combo { width: 108px; background: none; border-color: #5c5c5c; margin-right: 4px; }
.off label, label.off { width: 33px; text-align: right; }
.pct { display: flex; align-items: center; margin-left: 3px; }
.pct input { width: 23px; border-color: #5d5d5d; background: #4c4c4c; }
.pct svg { margin-left: 2px; }
.locks { height: 20px; border: 0; padding-left: 4px; padding-bottom: 1px; }
.locks > span:first-child { width: 18px; }
.licons { display: flex; gap: 7px; margin-left: 5px; }
.locks label.off { margin-left: 20px; }
.layerwrap { flex: 1; display: flex; }
.layers { flex: 1; margin: 0; padding: 0; list-style: none; }
.layers li { display: grid; grid-template-columns: 18px 1fr; height: 19px; border-bottom: 1px solid #4a4a4a; }
.lay { display: flex; align-items: center; padding-left: 5px; }
.sel .lay { background: #6b6b6b; }
.vis::before { content: ""; width: 7px; height: 7px; border: solid #464646; border-width: 0 1px 1px 0; }
.eye { padding-left: 3px; }
.eye::before { content: none; }
.thumbimg { width: 21px; height: 12px; margin-right: 6px; }
.ring { outline: 1px solid #fff; }
.lk { margin-left: auto; margin-right: 10px; }
.gutter { width: 11px; background: #4b4b4b; }
.layfoot { display: flex; align-items: center; justify-content: flex-end; gap: 10px; height: 18px; padding-right: 18px; border-top: 1px solid #444; }
.layfoot .corner::after { right: -3px; bottom: 0; }
.fx { font: italic 10px/8px "Liberation Serif", serif; }
.faint { color: #888; }

/* Taskbar */
.taskbar { position: relative; display: flex; justify-content: center; color: #fff; font-family: "Open Sans", sans-serif; font-size: 8px; background: linear-gradient(90deg, #232220, #1b2c3b 10%, #1c3236 22%, #1c352f 34%, #26222f 42%, #27232e 60%, #2a2b2a 76%, #1a2829 86%, #18252b); }
.apps { display: flex; align-items: center; justify-content: space-between; width: 390px; }
.apps button { position: relative; width: 24px; height: 27px; border-radius: 3px; }
.app-i { width: 16px; height: 16px; }
.apps .find { width: 65px; height: 21px; border-radius: 11px; background: #36303c; gap: 4px; }
.run::after { content: ""; position: absolute; bottom: 1px; width: 4px; height: 2px; border-radius: 1px; background: #999; }
.active { background: #383541; }
.active::after { width: 10px; background: #e88080; }
.badge { position: absolute; right: 1px; top: 3px; width: 8px; height: 8px; }
.ps-logo.big { width: 14px; height: 14px; font-size: 8px; }
.tray { position: absolute; right: 13px; top: 0; height: 100%; display: flex; align-items: center; gap: 9px; }
.more { margin-right: 2px; }
.micc { color: #c9705f; }
.lang { flex-direction: column; width: 20px; margin-right: 1px; line-height: 11px; }
.spk { margin-left: -6px; }
.clock { flex-direction: column; align-items: flex-end; width: 42px; line-height: 11px; }
```
FILE: script.js
```js
const tools = ["move", "marquee", "lasso", "wand", "crop", "frame", "dropper", "heal", "brush", "stamp", "histbrush", "eraser", "bucket", "drop", "mixer", "sponge", "pen", "type", "arrow", "rect", "hand", "search", "dots"];
const single = ["frame", "search"];
document.getElementById("tools").innerHTML = tools.map((name, i) =>
  `<button aria-label="${name}" class="${i ? "" : "on "}${single.includes(name) ? "" : "corner"}"><svg class="i12"><use href="#${name}"/></svg></button>`).join("");

const cell = n => `<div class="cell"><span>${n}</span></div>`;
const hundreds = n => Array.from({ length: n }, (_, i) => i * 100);
document.getElementById("rh").innerHTML = cell(100) + hundreds(21).map(cell).join("");
document.getElementById("rv").innerHTML = hundreds(13).map(cell).join("");
```
